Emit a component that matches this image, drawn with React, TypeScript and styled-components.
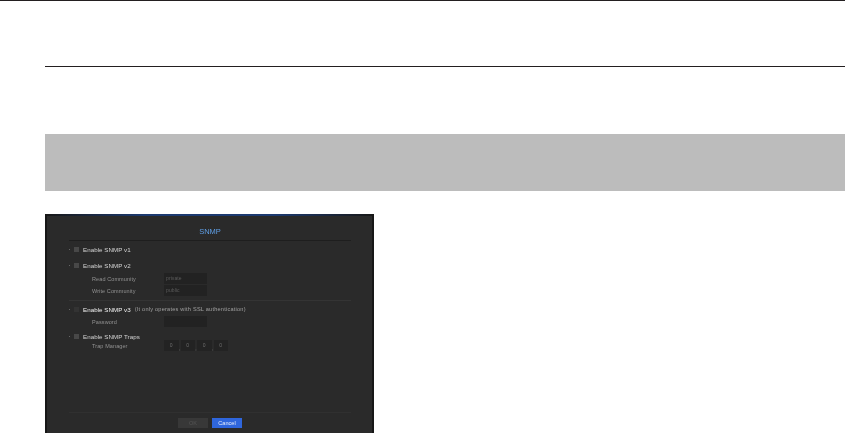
import React from 'react';
import styled, { createGlobalStyle } from 'styled-components';

const GlobalStyle = createGlobalStyle`
  html, body {
    margin: 0;
    padding: 0;
    background: #fff;
    overflow: hidden;
  }
`;

const Page = styled.div`
  width: 845px;
  height: 433px;
  overflow: hidden;
  border-top: 1px solid #231f20;
  box-sizing: border-box;
  padding: 65px 0 0 45px;
`;

const SectionRule = styled.hr`
  margin: 0;
  border: 0;
  height: 1px;
  background: #231f20;
`;

const NoteBand = styled.div`
  margin-top: 67px;
  height: 57px;
  background: #bcbcbc;
`;

const Dialog = styled.div`
  margin-top: 23px;
  width: 329px;
  height: 219px;
  box-sizing: border-box;
  display: flex;
  flex-direction: column;
  padding: 2px 21px 0 22px;
  background: linear-gradient(90deg, #181818 0, #1c3a70 30%, #1c3a70 70%, #181818 100%) top / 100% 2px no-repeat, #2a2a2a;
  border: 2px solid #171717;
  border-top: 0;
  border-bottom: 0;
  font-family: "Liberation Sans", Arial, sans-serif;
  filter: blur(0.4px);
`;

const DialogTitle = styled.div`
  height: 25px;
  padding-top: 9px;
  box-sizing: border-box;
  line-height: 14px;
  text-align: center;
  font-size: 7.5px;
  color: #5f9fe6;
  border-bottom: 1px solid #1e1e1e;
`;

const Body = styled.div`
  flex: 1;
  display: flex;
  flex-direction: column;
`;

const EnableRow = styled.div<{ $top: number }>`
  margin-top: ${(p) => p.$top}px;
  height: 10px;
  display: flex;
  align-items: center;
`;

const Dot = styled.span`
  width: 1px;
  height: 1px;
  margin-right: 4px;
  background: #666;
`;

const CheckBox = styled.span<{ $dim?: boolean }>`
  width: 5px;
  height: 5px;
  margin-right: 4px;
  background: ${(p) => (p.$dim ? '#333' : '#484848')};
`;

const EnableLabel = styled.span<{ $strong?: boolean }>`
  font-size: 6.2px;
  letter-spacing: 0.05px;
  color: ${(p) => (p.$strong ? '#f2f2f2' : '#d4d4d4')};
  white-space: nowrap;
`;

const EnableNote = styled.span`
  margin-left: 4px;
  font-size: 5.6px;
  letter-spacing: 0.22px;
  color: #a0a0a0;
  white-space: nowrap;
`;

const FieldRow = styled.div<{ $top?: number }>`
  margin-top: ${(p) => p.$top ?? 0}px;
  height: 11px;
  display: flex;
  align-items: center;
`;

const FieldLabel = styled.span`
  width: 72px;
  margin-left: 23px;
  font-size: 5.5px;
  letter-spacing: 0.1px;
  color: #929292;
  white-space: nowrap;
`;

const TextInput = styled.div`
  width: 43px;
  height: 11px;
  box-sizing: border-box;
  padding-left: 2px;
  line-height: 11px;
  font-size: 5px;
  letter-spacing: 0.1px;
  color: #5c5c5c;
  background: #222;
`;

const OctetGroup = styled.div`
  display: flex;
  align-items: flex-end;
`;

const Octet = styled.div`
  width: 14.5px;
  height: 11px;
  line-height: 11px;
  text-align: center;
  font-size: 5px;
  color: #6e6e6e;
  background: #232323;
`;

const OctetDot = styled.span`
  width: 2px;
  text-align: center;
  font-size: 5px;
  line-height: 6px;
  color: #777;
`;

const Divider = styled.div<{ $top: number }>`
  margin-top: ${(p) => p.$top}px;
  height: 1px;
  background: #343434;
`;

const Footer = styled.div`
  height: 21px;
  border-top: 1px solid #303030;
  box-sizing: border-box;
  padding-top: 5px;
  display: flex;
  justify-content: center;
  gap: 4px;
`;

const DialogButton = styled.div<{ $primary?: boolean }>`
  width: 30px;
  height: 10px;
  line-height: 10px;
  text-align: center;
  font-size: 5.6px;
  color: ${(p) => (p.$primary ? '#e6edfa' : '#555')};
  background: ${(p) => (p.$primary ? '#2f66dc' : '#383838')};
`;

const trapOctets = ['0', '0', '0', '0'];

export default function App() {
  return (
    <>
      <GlobalStyle />
      <Page>
        <SectionRule />
        <NoteBand />
        <Dialog>
          <DialogTitle>SNMP</DialogTitle>
          <Body>
            <EnableRow $top={3}>
              <Dot />
              <CheckBox />
              <EnableLabel>Enable SNMP v1</EnableLabel>
            </EnableRow>
            <EnableRow $top={6}>
              <Dot />
              <CheckBox />
              <EnableLabel>Enable SNMP v2</EnableLabel>
            </EnableRow>
            <FieldRow $top={3}>
              <FieldLabel>Read Community</FieldLabel>
              <TextInput>private</TextInput>
            </FieldRow>
            <FieldRow $top={1}>
              <FieldLabel>Write Community</FieldLabel>
              <TextInput>public</TextInput>
            </FieldRow>
            <Divider $top={4} />
            <EnableRow $top={3}>
              <Dot />
              <CheckBox $dim />
              <EnableLabel $strong>Enable SNMP v3</EnableLabel>
              <EnableNote>(It only operates with SSL authentication)</EnableNote>
            </EnableRow>
            <FieldRow $top={2}>
              <FieldLabel>Password</FieldLabel>
              <TextInput />
            </FieldRow>
            <EnableRow $top={4}>
              <Dot />
              <CheckBox />
              <EnableLabel>Enable SNMP Traps</EnableLabel>
            </EnableRow>
            <FieldRow $top={-1}>
              <FieldLabel>Trap Manager</FieldLabel>
              <OctetGroup>
                {trapOctets.map((value, i) => (
                  <React.Fragment key={i}>
                    {i > 0 && <OctetDot>,</OctetDot>}
                    <Octet>{value}</Octet>
                  </React.Fragment>
                ))}
              </OctetGroup>
            </FieldRow>
          </Body>
          <Footer>
            <DialogButton>OK</DialogButton>
            <DialogButton $primary>Cancel</DialogButton>
          </Footer>
        </Dialog>
      </Page>
    </>
  );
}
